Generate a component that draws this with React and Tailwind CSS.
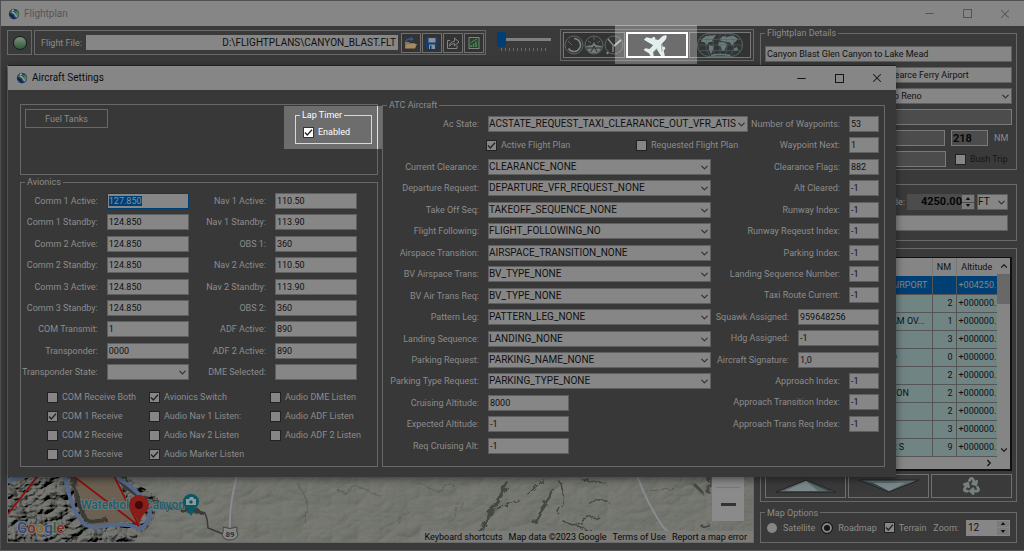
import React, { useEffect, useRef } from 'react';
import { ChevronDown, ChevronUp, ChevronRight, Minus, X, Recycle } from 'lucide-react';

const commFields = [
  ['Comm 1 Active:', '127.850'],
  ['Comm 1 Standby:', '124.850'],
  ['Comm 2 Active:', '124.850'],
  ['Comm 2 Standby:', '124.850'],
  ['Comm 3 Active:', '124.850'],
  ['Comm 3 Standby:', '124.850'],
  ['COM Transmit:', '1'],
  ['Transponder:', '0000'],
];

const navFields = [
  ['Nav 1 Active:', '110.50'],
  ['Nav 1 Standby:', '113.90'],
  ['OBS 1:', '360'],
  ['Nav 2 Active:', '110.50'],
  ['Nav 2 Standby:', '113.90'],
  ['OBS 2:', '360'],
  ['ADF Active:', '890'],
  ['ADF 2 Active:', '890'],
  ['DME Selected:', ''],
];

const avionicsChecks = [
  [['COM Receive Both', false], ['COM 1 Receive', true], ['COM 2 Receive', false], ['COM 3 Receive', false]],
  [['Avionics Switch', true], ['Audio Nav 1 Listen:', false], ['Audio Nav 2 Listen', false], ['Audio Marker Listen', true]],
  [['Audio DME Listen', false], ['Audio ADF Listen', false], ['Audio ADF 2 Listen', false]],
];

const atcSelects = [
  ['Current Clearance:', 'CLEARANCE_NONE'],
  ['Departure Request:', 'DEPARTURE_VFR_REQUEST_NONE'],
  ['Take Off Seq:', 'TAKEOFF_SEQUENCE_NONE'],
  ['Flight Following:', 'FLIGHT_FOLLOWING_NO'],
  ['Airspace Transition:', 'AIRSPACE_TRANSITION_NONE'],
  ['BV Airspace Trans:', 'BV_TYPE_NONE'],
  ['BV Air Trans Req:', 'BV_TYPE_NONE'],
  ['Pattern Leg:', 'PATTERN_LEG_NONE'],
  ['Landing Sequence:', 'LANDING_NONE'],
  ['Parking Request:', 'PARKING_NAME_NONE'],
  ['Parking Type Request:', 'PARKING_TYPE_NONE'],
];

const atcAltitudes = [
  ['Cruising Altitude:', '8000'],
  ['Expected Altitude:', '-1'],
  ['Req Cruising Alt:', '-1'],
];

// third value marks the wide boxes
const atcNumbers = [
  ['Number of Waypoints:', '53'],
  ['Waypoint Next:', '1'],
  ['Clearance Flags:', '882'],
  ['Alt Cleared:', '-1'],
  ['Runway Index:', '-1'],
  ['Runway Reqeust Index:', '-1'],
  ['Parking Index:', '-1'],
  ['Landing Sequence Number:', '-1'],
  ['Taxi Route Current:', '-1'],
  ['Squawk Assigned:', '959648256', true],
  ['Hdg Assigned:', '-1', true],
  ['Aircraft Signature:', '1,0', true],
  ['Approach Index:', '-1'],
  ['Approach Transition Index:', '-1'],
  ['Approach Trans Req Index:', '-1'],
];

const waypoints = [
  ['AIRPORT', '', '+004250.'],
  ['', '2', '+000000.'],
  ['AM OV...', '1', '+000000.'],
  ['', '3', '+000000.'],
  ['D', '0', '+000000.'],
  ['', '2', '+000000.'],
  ['YON', '2', '+000000.'],
  ['', '2', '+000000.'],
  ['', '3', '+000000.'],
  ['R S', '9', '+000000.'],
];

const toId = (label) => label.toLowerCase().replace(/[^a-z0-9]+/g, '-');

const fieldClass = 'h-4 border border-[#5f5f5f] bg-[#868686] leading-[14px] text-[#101010] outline-none';

const Field = ({ label, value, width = 'w-[82px]', inputRef, focusClass = '' }) => (
  <div className="flex h-4 items-center justify-end gap-[9px]">
    <label htmlFor={toId(label)} className="whitespace-nowrap">{label}</label>
    <input
      id={toId(label)}
      ref={inputRef}
      type="text"
      defaultValue={value}
      className={`${fieldClass} ${width} shrink-0 pl-px ${focusClass}`}
    />
  </div>
);

const Select = ({ id, value, width, className = '' }) => (
  <div className={`relative h-4 shrink-0 ${width}`}>
    <select id={id} aria-label={id} className={`${fieldClass} block w-full appearance-none ${className}`}>
      <option>{value}</option>
    </select>
    <ChevronDown className="pointer-events-none absolute top-[3px] right-px text-[#303030]" size={11} strokeWidth={2.5} />
  </div>
);

const Check = ({ label, checked, bright, textClass = '' }) => (
  <label className="flex h-3 items-center gap-1 whitespace-nowrap">
    <span className="relative h-[11px] w-[11px] shrink-0">
      <input
        type="checkbox"
        defaultChecked={checked}
        className={`peer block h-[11px] w-[11px] appearance-none border ${bright ? 'border-[#333] bg-white' : 'border-[#222] bg-[#868686]'}`}
      />
      <svg viewBox="0 0 11 11" className="pointer-events-none absolute inset-0 hidden h-[11px] w-[11px] peer-checked:block">
        <path d="M2 5.5 L4.3 8 L9 2.8" fill="none" stroke="#222" strokeWidth="1.3" />
      </svg>
    </span>
    <span className={textClass}>{label}</span>
  </label>
);

const Radio = ({ label, checked }) => (
  <label className="flex items-center gap-[6px]">
    <input
      type="radio"
      name="map-type"
      defaultChecked={checked}
      className="h-[10px] w-[10px] appearance-none rounded-full bg-[#868686] checked:border-2 checked:border-[#868686] checked:bg-[#151515] checked:outline checked:outline-[#151515]"
    />
    {label}
  </label>
);

const Spinner = () => (
  <span className="flex w-3 flex-col gap-px">
    <button type="button" aria-label="Increase" className="flex flex-1 items-center justify-center bg-[#7a7a7a]">
      <svg viewBox="0 0 6 4" className="h-[3px] w-[6px]"><path d="M0 4 L3 0 L6 4Z" fill="#111" /></svg>
    </button>
    <button type="button" aria-label="Decrease" className="flex flex-1 items-center justify-center bg-[#7a7a7a]">
      <svg viewBox="0 0 6 4" className="h-[3px] w-[6px]"><path d="M0 0 L3 4 L6 0Z" fill="#111" /></svg>
    </button>
  </span>
);

const Group = ({ title, className = '', bodyClass = '', children }) => (
  <fieldset className={`min-w-0 border border-[#686868] ${className}`}>
    <legend className="ml-1 px-[2px] leading-[10px]">{title}</legend>
    <div className={bodyClass}>{children}</div>
  </fieldset>
);

const AppLogo = () => (
  <svg viewBox="0 0 12 12" className="h-3 w-3">
    <circle cx="6" cy="6" r="5.2" fill="#1f3d66" />
    <path d="M1.500 4 Q3 1 6 1 L7 3 L5 4 L3 6Z" fill="#43683f" />
    <path d="M7 3 L10 3.500 L11 7 L8.500 10.500 L8 7Z" fill="#55784a" />
    <path d="M4 4 Q7 5 8.500 9" stroke="#8ba5b6" strokeWidth="1.4" fill="none" />
    <path d="M1.500 6 Q4 7 6 11" stroke="#12203a" strokeWidth="1.4" fill="none" />
    <path d="M4 2.500 L6 2" stroke="#a3b39c" strokeWidth="1" />
  </svg>
);

const WindowButtons = ({ color }) => (
  <div className={`flex ${color}`}>
    <button type="button" aria-label="Minimize" className="flex w-[38px] items-center justify-center"><Minus size={13} strokeWidth={2} /></button>
    <button type="button" aria-label="Maximize" className="flex w-[38px] items-center justify-center">
      <svg viewBox="0 0 9 9" className="h-[9px] w-[9px]"><rect x="0.500" y="0.500" width="8" height="8" fill="none" stroke="currentColor" /></svg>
    </button>
    <button type="button" aria-label="Close" className="flex w-[38px] items-center justify-center"><X size={14} strokeWidth={1.8} /></button>
  </div>
);

const toolButton = 'flex h-5 w-5 items-center justify-center border border-[#707070] bg-[#333]';

const FileTools = () => (
  <div className="flex gap-px">
    <button type="button" aria-label="Open" className={toolButton}>
      <svg viewBox="0 0 14 14" className="h-[14px] w-[14px]">
        <path d="M1 6 H5 L6 7 H11 V12 H1Z" fill="#8a7350" />
        <path d="M3 8 H13 L11 12.5 H1Z" fill="#a38a62" />
        <path d="M2 6 Q2 3 6 3 H7" fill="none" stroke="#2c5e8a" strokeWidth="1.6" />
        <path d="M6.5 0.5 L10 3 L6.5 5.5Z" fill="#2c5e8a" />
      </svg>
    </button>
    <button type="button" aria-label="Save" className={toolButton}>
      <svg viewBox="0 0 14 14" className="h-[14px] w-[14px]">
        <path d="M1 1 H13 V13 H2.500 L1 11.500Z" fill="#123f6e" />
        <rect x="3.500" y="2" width="7" height="4.500" fill="#8b9299" />
        <rect x="4" y="8.500" width="6" height="4.500" fill="#8b9299" />
        <rect x="5" y="9.500" width="1.500" height="3.500" fill="#123f6e" />
      </svg>
    </button>
    <button type="button" aria-label="Share" className={toolButton}>
      <svg viewBox="0 0 14 14" className="h-[14px] w-[14px]" fill="none" stroke="#858585" strokeWidth="1">
        <path d="M4 4.500 H1.500 V12.500 H11 V9.500" />
        <path d="M3.500 10 Q4 5.500 8.500 5.200 V2 L13 6 L8.500 9.800 V7.500 Q5.500 7.500 3.500 10Z" />
      </svg>
    </button>
    <button type="button" aria-label="Profile" className={toolButton}>
      <svg viewBox="0 0 14 14" className="h-[14px] w-[14px]">
        <rect x="2" y="1.500" width="10" height="11" fill="#2b4230" stroke="#7b857e" />
        <path d="M4 11 V9 M6.500 11 V7.500 M9 11 V5.500" stroke="#4d8a57" strokeWidth="1.500" />
        <path d="M4 7 L6 5 L10 3" stroke="#4d8a57" fill="none" />
      </svg>
    </button>
  </div>
);

const Gauges = () => (
  <svg viewBox="0 0 60 22" className="h-[22px] w-[60px] shrink-0" fill="none" stroke="#5c6665">
    <circle cx="10" cy="11" r="9" />
    <path d="M10 4.500 A6.500 6.500 0 1 1 4.500 14.500" stroke="#7b8786" strokeWidth="1.600" />
    <path d="M4 7 L8 11" strokeWidth="1" />
    <circle cx="30" cy="11" r="9" />
    <path d="M22 12 L28 11 L30 8 L32 11 L38 12 L36 17 L33 19 H27 L24 17Z" fill="#6f7a79" stroke="none" />
    <path d="M24 7 L27 9 M36 7 L33 9 M30 3 V6" />
    <path d="M27 18 L30 12 L33 18 M23 14 H37" stroke="#333" />
    <circle cx="50" cy="11" r="9" />
    <path d="M44 5 L49 11 V18" stroke="#8b9796" strokeWidth="1.200" />
    <path d="M50 12 L57 6" stroke="#a1acab" strokeWidth="1.800" />
    <circle cx="43.500" cy="19" r="1.200" fill="#7b8786" stroke="none" />
  </svg>
);

// airliner drawn nose up, turned to the right by the button
const Airliner = () => (
  <svg viewBox="0 0 28 28" className="h-7 w-7 rotate-45" fill="#e2eeee">
    <path d="M14 0.500 Q16.500 2 16.500 6 V9.500 L27 16 V19.500 L16.500 17 V22 L20 24.500 V27 L14 25.500 L8 27 V24.500 L11.500 22 V17 L1 19.500 V16 L11.500 9.500 V6 Q11.500 2 14 0.500Z" />
    <rect x="5.500" y="10" width="3" height="6" rx="1.400" />
    <rect x="19.500" y="10" width="3" height="6" rx="1.400" />
    <path d="M16.500 10 L22 15 M16.500 16.500 V22" fill="none" stroke="#7c8e8e" strokeWidth="0.700" />
  </svg>
);

const WorldMap = () => (
  <svg viewBox="0 0 46 24" className="h-6 w-[46px] shrink-0">
    <rect x="0.500" y="0.500" width="45" height="23" rx="11.500" fill="#333636" stroke="#5a6666" />
    <path d="M5 6 L9 3 L19 2 L17 5 L15 7 L16 9 L12 9 L10 12 L7 9 L4 9Z" fill="#6b7b7c" />
    <path d="M12 12 L17 13.500 L16 17 L14 21 L12 17Z" fill="#6b7b7c" />
    <path d="M23 6 L26 3 L30 4 L36 2.500 L41 6 L39 8 L37 10 L35 13 L33 9.500 L30 9 L24 8Z" fill="#6b7b7c" />
    <path d="M22 9 L28 9.500 L30 12 L27 18 L25 18 L24 14 L21 12Z" fill="#6b7b7c" />
    <path d="M37 15.500 L40 14 L41 17 L37 18Z" fill="#6b7b7c" />
    <path d="M0.500 12 H45.500 M3 6.500 H43 M3 17.500 H43 M23 0.500 V23.500 M13 0.500 Q5 12 13 23.500 M33 0.500 Q41 12 33 23.500 M18 0.500 Q14 12 18 23.500 M28 0.500 Q32 12 28 23.500" fill="none" stroke="#566161" strokeWidth="0.600" />
    <path d="M14 22.500 Q23 20.500 33 22.500" fill="none" stroke="#6b7b7c" strokeWidth="1.400" />
  </svg>
);

const Toolbar = () => (
  <div className="flex items-start gap-[2px]">
    <div className="mt-1 flex h-[25px] w-[25px] shrink-0 items-center justify-center border border-[#686868]">
      <span className="h-[14px] w-[14px] rounded-full border border-[#1a1a1a] bg-linear-to-b from-[#7f917f] to-[#2f5a35]" />
    </div>
    <div className="mt-1 flex h-[25px] min-w-0 flex-1 items-center gap-[3px] border border-[#686868] pr-px pl-[6px]">
      <label htmlFor="flight-file" className="mr-px whitespace-nowrap">Flight File:</label>
      <input id="flight-file" type="text" defaultValue="D:\FLIGHTPLANS\CANYON_BLAST.FLT" className="h-[15px] min-w-0 flex-1 bg-[#868686] pr-[2px] text-right text-[10px] text-[#101010] outline-none" />
      <FileTools />
    </div>
    <div className="mt-[5px] ml-[9px] w-[54px] shrink-0">
      <input
        type="range"
        aria-label="Speed"
        defaultValue="0"
        className="block h-4 w-full appearance-none bg-transparent [&::-webkit-slider-runnable-track]:h-[3px] [&::-webkit-slider-runnable-track]:bg-[#808080] [&::-webkit-slider-thumb]:-mt-[6px] [&::-webkit-slider-thumb]:h-[15px] [&::-webkit-slider-thumb]:w-[9px] [&::-webkit-slider-thumb]:appearance-none [&::-webkit-slider-thumb]:rounded-b-[4px] [&::-webkit-slider-thumb]:bg-[#003f73]"
      />
      <svg viewBox="0 0 54 4" className="h-1 w-[54px]">
        <path d="M4 2.500 H50" stroke="#6a6a6a" strokeWidth="3" strokeDasharray="1 3" />
      </svg>
    </div>
    <div className="mt-[3px] ml-[7px] flex shrink-0 items-center gap-px border border-[#686868] p-[2px]">
      <button type="button" aria-label="Instruments" className="flex h-[26px] w-[62px] items-center justify-center border border-[#777] bg-[#333]">
        <Gauges />
      </button>
      <span className="relative">
        <span className="pointer-events-none absolute -top-[7px] -right-[9px] -bottom-[6px] -left-[11px] bg-white/30" />
        <button type="button" aria-label="Aircraft" className="relative flex h-[26px] w-[62px] items-center justify-center overflow-hidden border-2 border-white bg-[#6d6d6d]">
          <Airliner />
        </button>
      </span>
      <button type="button" aria-label="World map" className="flex h-[26px] w-[62px] items-center justify-center border border-[#777] bg-[#333]">
        <WorldMap />
      </button>
    </div>
  </div>
);

const FlightMap = () => (
  <div className="flex min-h-0 flex-1 flex-col justify-end border border-[#6a6a6a] bg-[#6f716b]">
    <div className="relative h-[70px] overflow-hidden">
      <svg viewBox="0 0 745 70" preserveAspectRatio="xMinYMax slice" className="block h-[70px] w-full">
        <defs>
          <filter id="relief" x="0" y="0" width="100%" height="100%">
            <feTurbulence type="turbulence" baseFrequency="0.05 0.07" numOctaves="5" seed="8" />
            <feDiffuseLighting surfaceScale="8" lightingColor="#7b7d78" diffuseConstant="0.95">
              <feDistantLight azimuth="225" elevation="50" />
            </feDiffuseLighting>
            <feComposite in2="SourceGraphic" operator="in" />
          </filter>
          <filter id="plain" x="0" y="0" width="100%" height="100%">
            <feTurbulence type="turbulence" baseFrequency="0.02 0.03" numOctaves="4" seed="3" />
            <feDiffuseLighting surfaceScale="2" lightingColor="#787a73" diffuseConstant="1.05">
              <feDistantLight azimuth="225" elevation="60" />
            </feDiffuseLighting>
          </filter>
          <filter id="rough" x="-10%" y="-10%" width="120%" height="120%">
            <feTurbulence type="fractalNoise" baseFrequency="0.12" numOctaves="3" seed="5" />
            <feDisplacementMap in="SourceGraphic" scale="9" />
          </filter>
        </defs>
        <rect width="745" height="70" filter="url(#plain)" />
        <path d="M0 0 H110 L150 25 L145 50 L125 70 H0Z" fill="#777" filter="url(#relief)" />
        <path d="M62 0 H104 L133 50 Q110 48 95 54 Q78 56 72 42Z" fill="#6b6051" />
        <path d="M66 5 Q66 30 80 50 L100 48 M108 4 Q122 22 142 28 Q162 38 195 40" fill="none" stroke="#3b3a36" strokeWidth="4" filter="url(#rough)" />
        <path d="M150 37 Q180 36 197 41 Q200 48 200 56 L215 62" fill="none" stroke="#3b3a36" strokeWidth="1.500" />
        <g fill="none" stroke="#454642" strokeLinecap="round" filter="url(#rough)">
          <path d="M546 20 L525 50 M500 12 Q482 40 472 62" strokeWidth="3.500" />
          <path d="M552 10 Q560 30 550 42 M510 28 L485 40 M535 8 L520 22 M575 8 L598 12 M580 30 H600 M590 44 L570 52 M556 50 L585 60" strokeWidth="1.500" />
          <path d="M694 54 L700 52 M686 12 L694 20 M700 0 V20" strokeWidth="3" />
          <path d="M410 10 L430 20 L445 12 M330 20 L350 14 L372 24 M288 10 L300 30 L296 50 M455 30 L440 50 M640 20 L672 14 M390 50 L402 40" stroke="#5c5e58" />
        </g>
        <path d="M56 0 Q62 35 74 50 Q80 57 97 54 Q115 50 133 56 Q145 48 141 36 Q132 18 106 4" fill="none" stroke="#56688a" strokeWidth="4" />
        <path d="M0 9 Q10 4 22 3" fill="none" stroke="#56688a" strokeWidth="5" />
        <path d="M230 0 Q221 32 222 56 M628 0 Q636 26 655 55 L668 66" fill="none" stroke="#8a8890" strokeWidth="2" />
        <path d="M0 42 L33 0 M60 0 L131 54 L104 0" fill="none" stroke="#8c0f0f" strokeWidth="1.800" />
        <text x="73" y="37" fontSize="12" fontWeight="500" fill="#1b5f69" stroke="#77797a" strokeWidth="1.500" paintOrder="stroke" fontFamily="Roboto, sans-serif">Waterholes Canyon</text>
        <path d="M131 53 Q129 44 123 39 A10 10 0 1 1 139 39 Q133 44 131 53Z" fill="#871e19" />
        <circle cx="131" cy="33" r="4" fill="#430807" />
        <path d="M183 44 L178 36 A8 8 0 1 1 188 36Z" fill="#0e5662" />
        <path d="M178 27 H181 L182 25 H185 L186 27 H188 V33 H178Z" fill="#8a9a9c" />
        <circle cx="183" cy="30" r="1.700" fill="#0e5662" />
        <path d="M215 55 Q222 58 229 55 Q228 59 230 63 Q228 68 222 68 Q216 68 214 63 Q216 59 215 55Z" fill="#858585" stroke="#444" />
        <text x="222" y="65" textAnchor="middle" fontSize="8" fontWeight="700" fill="#333" fontFamily="Roboto, sans-serif">89</text>
        <text x="9" y="61" fontSize="15" fontWeight="500" stroke="#858585" strokeWidth="1.500" paintOrder="stroke" fontFamily="Roboto, sans-serif">
          <tspan fill="#2c4a80">G</tspan><tspan fill="#802a24">o</tspan><tspan fill="#84681a">o</tspan><tspan fill="#2c4a80">g</tspan><tspan fill="#2a6138">l</tspan><tspan fill="#802a24">e</tspan>
        </text>
      </svg>
      <div className="absolute right-[9px] bottom-[21px] flex h-[52px] w-8 flex-col items-center bg-[#8a8a8a]">
        <button type="button" aria-label="Zoom in" className="flex h-[18px] w-full items-end justify-center"><span className="mb-[10px] h-2 w-[3px] bg-[#333]" /></button>
        <span className="h-px w-6 bg-[#777]" />
        <button type="button" aria-label="Zoom out" className="flex w-full flex-1 items-center justify-center"><span className="h-[3px] w-[15px] bg-[#333]" /></button>
      </div>
      <div className="absolute right-0 bottom-0 flex h-[11px] items-center gap-[6px] bg-[#7b7b78] pr-[6px] pl-1 text-[#080808]">
        <a href="#shortcuts">Keyboard shortcuts</a>
        <span>Map data ©2023 Google</span>
        <a href="#terms">Terms of Use</a>
        <a href="#report">Report a map error</a>
      </div>
    </div>
  </div>
);

const darkField = 'h-4 border border-[#7a7a7a] bg-[#4c4c4c] text-[#080808] outline-none';

const FlightplanDetails = () => (
  <Group title="Flightplan Details" bodyClass="flex flex-col gap-[5px] px-1 pt-2 pb-[2px]">
    <input type="text" aria-label="Title" defaultValue="Canyon Blast Glen Canyon to Lake Mead" className={`${fieldClass} w-full pl-px`} />
    <input type="text" aria-label="Destination" defaultValue="Pearce Ferry Airport" className={`${fieldClass} w-full pl-[123px]`} />
    <Select id="Plan" value="to Reno" width="w-full" className="pl-[125px]" />
    <input type="text" aria-label="Notes" className={`${darkField} w-full`} />
    <div className="flex items-center gap-[6px]">
      <input type="text" aria-label="Route" className={`${darkField} min-w-0 flex-1`} />
      <input type="text" aria-label="Distance" defaultValue="218" className={`${darkField} w-[37px] pl-px text-[11px] font-bold`} />
      <span className="w-[18px]">NM</span>
    </div>
    <div className="flex items-center gap-[9px]">
      <input type="text" aria-label="Cruise" className={`${darkField} min-w-0 flex-1`} />
      <div className="w-[57px]"><Check label="Bush Trip" textClass="text-[#161616]" /></div>
    </div>
  </Group>
);

const AltitudePanel = () => (
  <div className="mt-[14px] flex h-[57px] flex-col justify-center gap-[5px] border border-[#686868] pr-[8px] pl-1">
    <div className="flex items-center justify-end gap-[2px]">
      <label htmlFor="altitude">Altitude:</label>
      <span className="flex h-4 w-[68px] bg-[#4c4c4c] p-px">
        <input id="altitude" type="text" defaultValue="4250.00" className="w-0 min-w-0 flex-1 text-right text-[11px] font-bold text-[#060606] outline-none" />
        <Spinner />
      </span>
      <Select id="Units" value="FT" width="w-[31px]" className="text-[10px]" />
    </div>
    <input type="text" aria-label="Comment" className={`${fieldClass} w-full`} />
  </div>
);

const WaypointGrid = () => (
  <div className="mt-[7px] border border-[#686868] px-1 pt-2 pb-[3px]">
    <div className="border-t border-r-2 border-b-2 border-[#111] bg-[#868686]">
      <div className="flex">
        <table className="w-full flex-1 table-fixed border-collapse text-[#101010]">
          <thead>
            <tr className="h-[18px] bg-[#858585]">
              <th className="border-r border-[#777]" />
              <th className="w-[41px] border-r border-[#777]" />
              <th className="w-6 border-r border-[#777] p-0 font-normal">NM</th>
              <th className="w-[41px] p-0 font-normal">Altitude</th>
            </tr>
          </thead>
          <tbody>
            {waypoints.map((row, i) => (
              <tr key={i} className={`h-[18px] ${i === 0 ? 'bg-[#003f73] text-[#858585]' : 'bg-[#718484]'}`}>
                <td className="border-b border-[#555]" />
                <td className="border-r border-b border-[#555] p-0 whitespace-nowrap">{row[0]}</td>
                <td className="border-r border-b border-[#555] p-0 pr-[3px] text-right">{row[1]}</td>
                <td className="border-b border-[#555] p-0 pl-[2px] whitespace-nowrap">{row[2]}</td>
              </tr>
            ))}
          </tbody>
        </table>
        <div className="flex w-[13px] flex-col items-center bg-[#858585]">
          <ChevronUp size={10} strokeWidth={3} className="my-[3px] text-[#222]" />
          <span className="h-[30px] w-full bg-[#686868]" />
          <ChevronDown size={10} strokeWidth={3} className="mt-auto mb-[2px] text-[#222]" />
        </div>
      </div>
      <div className="flex h-3 items-center justify-end pr-4">
        <ChevronRight size={10} strokeWidth={3} className="text-[#111]" />
      </div>
    </div>
    <div className="mt-[3px] grid grid-cols-3 gap-[2px]">
      <button type="button" aria-label="Move up" className="flex h-6 items-center justify-center border border-[#707070]">
        <svg viewBox="0 0 60 14" className="h-[14px] w-[60px]">
          <path d="M0 13 L30 1 L60 13Z" fill="#5c6869" stroke="#1e2222" />
          <path d="M9 12 L30 2 L42 12Z" fill="#7a8889" />
          <path d="M30 2 L52 12 L60 13Z" fill="#394142" />
        </svg>
      </button>
      <button type="button" aria-label="Move down" className="flex h-6 items-center justify-center border border-[#707070]">
        <svg viewBox="0 0 60 14" className="h-[14px] w-[60px]">
          <path d="M0 1 L30 13 L60 1Z" fill="#5c6869" stroke="#1e2222" />
          <path d="M14 4 H46 L30 12Z" fill="#7a8889" />
          <path d="M0 1 L14 4 L30 12Z" fill="#394142" />
        </svg>
      </button>
      <button type="button" aria-label="Recycle" className="flex h-6 items-center justify-center border border-[#707070] text-[#77807f]">
        <Recycle size={19} strokeWidth={3.5} />
      </button>
    </div>
  </div>
);

const MapOptions = () => (
  <Group title="Map Options" className="mt-[6px]" bodyClass="pt-[2px] pr-[6px] pb-[6px] pl-[6px]">
    <div className="flex h-4 items-center justify-between">
      <Radio label="Satellite" />
      <Radio label="Roadmap" checked />
      <Check label="Terrain" checked />
      <label htmlFor="zoom">Zoom:</label>
      <span className="flex h-4 w-[44px] bg-[#868686] p-px">
        <input id="zoom" type="text" defaultValue="12" className="w-0 min-w-0 flex-1 pl-px text-[10px] text-[#101010] outline-none" />
        <Spinner />
      </span>
    </div>
  </Group>
);

const Avionics = () => {
  const firstField = useRef(null);

  useEffect(() => {
    firstField.current.focus();
    firstField.current.select();
  }, []);

  return (
    <Group title="Avionics" className="mt-[2px]" bodyClass="pt-[6px] pb-[6px]">
      <div className="flex h-[187px] justify-between pr-5 pl-px">
        <div className="flex flex-col justify-between">
          {commFields.map(([label, value], i) => (
            <Field
              key={label}
              label={label}
              value={value}
              inputRef={i === 0 ? firstField : undefined}
              focusClass="focus:border-[#003f73] selection:bg-[#003f73] selection:text-[#7d93a5]"
            />
          ))}
          <div className="flex h-4 items-center justify-end gap-[9px]">
            <label htmlFor="transponder-state" className="whitespace-nowrap">Transponder State:</label>
            <Select id="transponder-state" value="" width="w-[82px]" />
          </div>
        </div>
        <div className="flex flex-col justify-between">
          {navFields.map(([label, value]) => (
            <Field key={label} label={label} value={value} />
          ))}
        </div>
      </div>
      <div className="mt-[11px] flex pl-[26px]">
        {avionicsChecks.map((column, i) => (
          <div key={i} className={`flex shrink-0 flex-col gap-[7px] ${i === 0 ? 'w-[102px]' : 'min-w-0 basis-[121px]'}`}>
            {column.map(([label, checked]) => (
              <Check key={label} label={label} checked={checked} />
            ))}
          </div>
        ))}
      </div>
    </Group>
  );
};

const AtcAircraft = () => (
  <Group title="ATC Aircraft" className="flex-1" bodyClass="flex items-start pt-[6px] pr-[5px] pb-[11px] pl-[5px]">
    <div className="flex h-[338px] w-[323px] shrink-0 flex-col justify-between">
      <div className="flex h-4 items-center gap-[9px]">
        <label htmlFor="ac-state" className="w-[91px] shrink-0 text-right">Ac State:</label>
        <Select id="ac-state" value="ACSTATE_REQUEST_TAXI_CLEARANCE_OUT_VFR_ATIS" width="w-[260px]" className="text-[10px]" />
      </div>
      <div className="flex h-4 items-center pl-[98px]">
        <div className="w-[150px] shrink-0"><Check label="Active Flight Plan" checked /></div>
        <Check label="Requested Flight Plan" />
      </div>
      {atcSelects.map(([label, value]) => (
        <div key={label} className="flex h-4 items-center gap-[9px]">
          <label htmlFor={toId(label)} className="flex w-[91px] shrink-0 justify-end whitespace-nowrap">{label}</label>
          <Select id={toId(label)} value={value} width="w-[223px]" className="text-[10px]" />
        </div>
      ))}
      {atcAltitudes.map(([label, value]) => (
        <div key={label} className="pr-[142px]">
          <Field label={label} value={value} width="w-[81px]" />
        </div>
      ))}
    </div>
    <div className="flex h-[316px] flex-1 flex-col justify-between">
      {atcNumbers.map(([label, value, wide]) => (
        <Field key={label} label={label} value={value} width={wide ? 'w-[81px]' : 'w-[30px]'} />
      ))}
    </div>
  </Group>
);

const AircraftSettings = () => (
  <div role="dialog" aria-label="Aircraft Settings" className="absolute top-16 right-32 left-[7px] border-t border-[#222] bg-[#383838] shadow-[0_2px_8px_rgba(0,0,0,0.5)]">
    <div className="flex h-6 items-center bg-[#868686] pl-2 text-[#0c0c0c]">
      <AppLogo />
      <h2 className="ml-1 flex-1 text-[10px]">Aircraft Settings</h2>
      <WindowButtons color="text-[#151515]" />
    </div>
    <div className="flex gap-1 pt-[10px] pr-[11px] pb-[10px] pl-3">
      <div className="w-[358px] shrink-0 pt-1">
        <div className="flex h-[71px] items-start justify-between border border-[#686868] pl-1">
          <button type="button" className="mt-1 h-[19px] w-[83px] border border-[#686868]">Fuel Tanks</button>
          <div className="relative z-10 -mr-[5px] mt-px h-[43px] w-[98px] bg-[#6d6d6d] pr-1">
            <div className="h-full border-r border-[#e0e0e0] pt-1 pr-[5px] pl-[11px] text-white">
              <fieldset className="border border-[#d8d8d8]">
                <legend className="ml-1 px-[2px] leading-[10px]">Lap Timer</legend>
                <div className="pt-[6px] pb-[5px] pl-[7px]"><Check label="Enabled" checked bright /></div>
              </fieldset>
            </div>
          </div>
        </div>
        <Avionics />
      </div>
      <AtcAircraft />
    </div>
  </div>
);

const App = () => (
  <div className="relative flex min-h-screen flex-col border-t border-l border-[#505050] bg-[#3a3a3a] font-[family-name:Roboto,sans-serif] text-[9px] leading-3 text-[#8c8c8c]">
    <header className="flex h-[25px] items-center bg-[#868686] pl-[7px] text-[#555]">
      <AppLogo />
      <h1 className="ml-1 flex-1 text-[10px]">Flightplan</h1>
      <WindowButtons color="text-[#555]" />
    </header>
    <main className="flex flex-1 gap-[6px] pr-[7px] pl-[6px]">
      <div className="flex min-w-0 flex-1 flex-col gap-1">
        <Toolbar />
        <FlightMap />
      </div>
      <aside className="w-[257px] shrink-0 pt-[2px]">
        <FlightplanDetails />
        <AltitudePanel />
        <WaypointGrid />
        <MapOptions />
      </aside>
    </main>
    <footer className="h-2 border-b border-[#5a5a5a]" />
    <AircraftSettings />
  </div>
);

export default App;
